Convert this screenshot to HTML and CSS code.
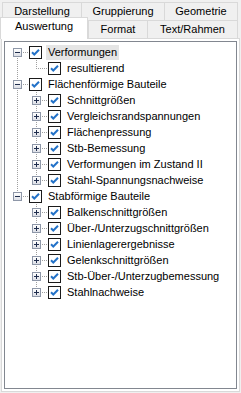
FILE: index.html
```html
<!DOCTYPE html>
<html lang="de">
<head>
  <meta charset="UTF-8" />
  <title>Auswertung</title>
  <link rel="stylesheet" href="styles.css">
</head>
<body>
  <div class="tabs">
    <div class="tab-row back">
      <div class="tab t-darst">Darstellung</div>
      <div class="tab t-grupp">Gruppierung</div>
      <div class="tab t-geom">Geometrie</div>
    </div>
    <div class="tab-row front">
      <div class="tab active t-ausw">Auswertung</div>
      <div class="tab t-format">Format</div>
      <div class="tab t-text">Text/Rahmen</div>
    </div>
  </div>

  <div class="page">
    <div class="tree">
      <!-- Verformungen -->
      <div class="row">
        <span class="cell link first"><i class="exp minus"></i></span>
        <span class="chk"></span><span class="label sel">Verformungen</span>
      </div>
      <div class="row">
        <span class="cell pipe"></span><span class="cell link last"></span>
        <span class="chk"></span><span class="label">resultierend</span>
      </div>

      <!-- Flächenförmige Bauteile -->
      <div class="row">
        <span class="cell link tee"><i class="exp minus"></i></span>
        <span class="chk"></span><span class="label">Flächenförmige Bauteile</span>
      </div>
      <div class="row">
        <span class="cell pipe"></span><span class="cell link tee"><i class="exp plus"></i></span>
        <span class="chk"></span><span class="label">Schnittgrößen</span>
      </div>
      <div class="row">
        <span class="cell pipe"></span><span class="cell link tee"><i class="exp plus"></i></span>
        <span class="chk"></span><span class="label">Vergleichsrandspannungen</span>
      </div>
      <div class="row">
        <span class="cell pipe"></span><span class="cell link tee"><i class="exp plus"></i></span>
        <span class="chk"></span><span class="label">Flächenpressung</span>
      </div>
      <div class="row">
        <span class="cell pipe"></span><span class="cell link tee"><i class="exp plus"></i></span>
        <span class="chk"></span><span class="label">Stb-Bemessung</span>
      </div>
      <div class="row">
        <span class="cell pipe"></span><span class="cell link tee"><i class="exp plus"></i></span>
        <span class="chk"></span><span class="label">Verformungen im Zustand II</span>
      </div>
      <div class="row">
        <span class="cell pipe"></span><span class="cell link last"><i class="exp plus"></i></span>
        <span class="chk"></span><span class="label">Stahl-Spannungsnachweise</span>
      </div>

      <!-- Stabförmige Bauteile -->
      <div class="row">
        <span class="cell link last"><i class="exp minus"></i></span>
        <span class="chk"></span><span class="label">Stabförmige Bauteile</span>
      </div>
      <div class="row">
        <span class="cell"></span><span class="cell link tee"><i class="exp plus"></i></span>
        <span class="chk"></span><span class="label">Balkenschnittgrößen</span>
      </div>
      <div class="row">
        <span class="cell"></span><span class="cell link tee"><i class="exp plus"></i></span>
        <span class="chk"></span><span class="label">Über-/Unterzugschnittgrößen</span>
      </div>
      <div class="row">
        <span class="cell"></span><span class="cell link tee"><i class="exp plus"></i></span>
        <span class="chk"></span><span class="label">Linienlagerergebnisse</span>
      </div>
      <div class="row">
        <span class="cell"></span><span class="cell link tee"><i class="exp plus"></i></span>
        <span class="chk"></span><span class="label">Gelenkschnittgrößen</span>
      </div>
      <div class="row">
        <span class="cell"></span><span class="cell link tee"><i class="exp plus"></i></span>
        <span class="chk"></span><span class="label">Stb-Über-/Unterzugbemessung</span>
      </div>
      <div class="row">
        <span class="cell"></span><span class="cell link last"><i class="exp plus"></i></span>
        <span class="chk"></span><span class="label">Stahlnachweise</span>
      </div>
    </div>
  </div>
</body>
</html>
```

FILE: styles.css
```css
body {
  margin: 0;
  width: 241px;
  height: 393px;
  overflow: hidden;
  background: #f0f0f0;
  font-family: "Liberation Sans", Arial, sans-serif;
  font-size: 11px;
  color: #000;
}

/* Tab strip: two rows, selected tab pulled to the front */
.tabs {
  padding-top: 2px;
}
.tab-row {
  display: flex;
  align-items: flex-start;
  height: 18px;
  margin-left: 2px;
}
.tab {
  box-sizing: border-box;
  height: 18px;
  border-top: 1px solid #d9d9d9;
  border-left: 1px solid #d9d9d9;
  background: #f0f0f0;
  text-align: center;
  line-height: 17px;
  white-space: nowrap;
}
.tab:last-child {
  border-right: 1px solid #d9d9d9;
}
.t-darst { width: 79px; }
.t-grupp { width: 83px; }
.t-geom { width: 74px; }
.t-ausw { width: 88px; }
.t-format { width: 59px; }
.t-text { width: 91px; }
.tab.active {
  position: relative;
  z-index: 1;
  height: 22px;
  margin-left: -2px;
  margin-top: -3px;
  border-right: 1px solid #d9d9d9;
  background: #fff;
}

/* Tab page */
.page {
  box-sizing: border-box;
  width: 239px;
  height: 354px;
  margin-left: 1px;
  padding: 2px;
  border: 1px solid #d9d9d9;
  background: #fff;
}
.tree {
  box-sizing: border-box;
  height: 100%;
  padding: 2px 0 0 3px;
  border: 1px solid #828790;
  background: #fff;
}

/* Tree rows */
.row {
  display: flex;
  align-items: center;
  height: 16px;
}
.cell {
  flex: none;
  display: flex;
  align-items: center;
  width: 19px;
  height: 16px;
}
.cell.link {
  width: 21px;
}
.cell.pipe {
  background: repeating-linear-gradient(to bottom, #a0a0a0 0 1px, transparent 1px 2px) 9px 0 / 1px 16px no-repeat;
}
.cell.tee {
  background:
    repeating-linear-gradient(to right, #a0a0a0 0 1px, transparent 1px 2px) 9px 8px / 12px 1px no-repeat,
    repeating-linear-gradient(to bottom, #a0a0a0 0 1px, transparent 1px 2px) 9px 0 / 1px 16px no-repeat;
}
.cell.last {
  background:
    repeating-linear-gradient(to right, #a0a0a0 0 1px, transparent 1px 2px) 9px 8px / 12px 1px no-repeat,
    repeating-linear-gradient(to bottom, #a0a0a0 0 1px, transparent 1px 2px) 9px 0 / 1px 9px no-repeat;
}
.cell.first {
  background:
    repeating-linear-gradient(to right, #a0a0a0 0 1px, transparent 1px 2px) 9px 8px / 12px 1px no-repeat,
    repeating-linear-gradient(to bottom, #a0a0a0 0 1px, transparent 1px 2px) 9px 8px / 1px 8px no-repeat;
}

/* Expand / collapse box */
.exp {
  box-sizing: border-box;
  width: 9px;
  height: 9px;
  margin-left: 5px;
  border: 1px solid #8e97a8;
  background:
    linear-gradient(#1f2d4d, #1f2d4d) 1px 3px / 5px 1px no-repeat,
    linear-gradient(#fff, #dcdfe6);
}
.exp.plus {
  background:
    linear-gradient(#1f2d4d, #1f2d4d) 1px 3px / 5px 1px no-repeat,
    linear-gradient(#1f2d4d, #1f2d4d) 3px 1px / 1px 5px no-repeat,
    linear-gradient(#fff, #dcdfe6);
}

/* Check box */
.chk {
  flex: none;
  box-sizing: border-box;
  width: 13px;
  height: 13px;
  border: 1px solid #1a1a1a;
  background: #fff url("data:image/svg+xml,%3Csvg xmlns='http://www.w3.org/2000/svg' width='11' height='11'%3E%3Cpath d='M2 5.2 L4.3 7.5 L9 2.8' fill='none' stroke='%232372c8' stroke-width='2'/%3E%3C/svg%3E") center / 11px 11px no-repeat;
}

.label {
  margin-left: 4px;
  padding: 0 2px;
  height: 15px;
  line-height: 15px;
  white-space: nowrap;
}
.label.sel {
  background: #e5e5e5;
}
```
